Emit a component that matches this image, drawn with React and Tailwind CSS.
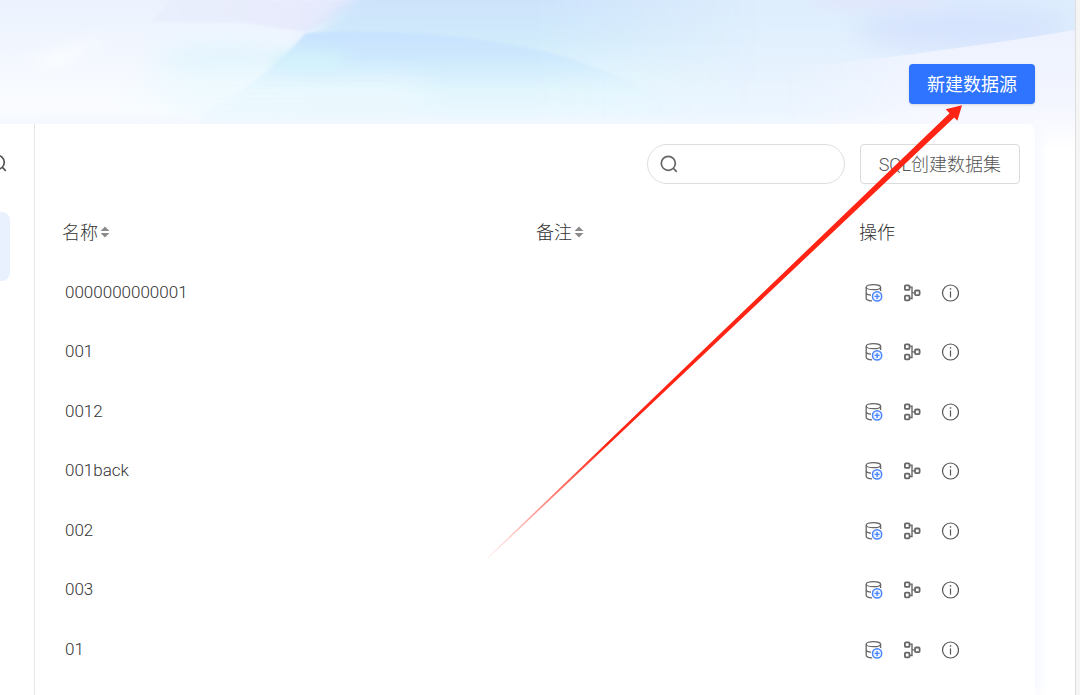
import React, { useState } from 'react';

const ROWS = ['0000000000001', '001', '0012', '001back', '002', '003', '01'];

const SearchIcon = ({ className }) => (
  <svg className={className} viewBox="0 0 18 18" fill="none" stroke="currentColor" strokeWidth="1.7" aria-hidden="true">
    <circle cx="8.3" cy="8.3" r="7" />
    <path d="M13.2 13.2L16.8 16.8" />
  </svg>
);

const DatabaseAddIcon = () => (
  <svg className="h-[18px] w-[18px]" viewBox="0 0 18 18" fill="none" stroke="#666" strokeWidth="1.3" aria-hidden="true">
    <ellipse cx="8.4" cy="3.2" rx="7.2" ry="2.5" />
    <path d="M1.2 3.3V14.3C1.2 15.7 3.6 16.7 7 16.8" />
    <path d="M15.6 3.3V7" />
    <path d="M1.2 9.2C1.6 10.3 3.4 10.9 6 11.1" />
    <circle cx="12.1" cy="12.4" r="4.6" stroke="#4a86ff" strokeWidth="1.5" fill="#eef4ff" />
    <path d="M9.6 12.4H14.6M12.1 9.9V14.9" stroke="#4a86ff" strokeWidth="1.4" />
  </svg>
);

const LineageIcon = () => (
  <svg className="h-[18px] w-[18px]" viewBox="0 0 18 18" fill="none" stroke="#666" strokeWidth="1.8" aria-hidden="true">
    <rect x="1.9" y="1.3" width="4.6" height="4.6" rx="1" />
    <rect x="1.9" y="11.7" width="4.6" height="4.6" rx="1" />
    <rect x="12" y="6.5" width="4.6" height="4.6" rx="1" />
    <path d="M6.7 3.1H9V14.5H6.7M9 8.9H11.9" strokeWidth="1.4" />
  </svg>
);

const InfoIcon = () => (
  <svg className="h-[18px] w-[18px]" viewBox="0 0 18 18" fill="none" stroke="#555" strokeWidth="1.2" aria-hidden="true">
    <circle cx="9.5" cy="9" r="8" />
    <path d="M9.5 7.4V13.6" />
    <path d="M9.5 4.2V5.7" strokeWidth="1.4" />
  </svg>
);

const SortIcon = () => (
  <svg className="h-3 w-[10px]" viewBox="0 0 10 12" fill="#8a8a8a" aria-hidden="true">
    <path d="M5 0.4L9.4 5H0.6Z" />
    <path d="M5 11.6L0.6 7H9.4Z" />
  </svg>
);

const Banner = () => (
  <svg
    className="absolute inset-x-0 top-0 h-[180px] w-full"
    viewBox="0 0 1075 180"
    preserveAspectRatio="none"
    aria-hidden="true"
  >
    <defs>
      <linearGradient id="base" x1="0" y1="0" x2="0" y2="1">
        <stop offset="0" stopColor="#ebf2fe" />
        <stop offset="0.6" stopColor="#fafcff" />
        <stop offset="0.68" stopColor="#f5f9ff" />
        <stop offset="1" stopColor="#ffffff" />
      </linearGradient>
      <linearGradient id="lavender" x1="0" y1="0" x2="1" y2="0">
        <stop offset="0" stopColor="#e9f0fd" />
        <stop offset="0.6" stopColor="#e8ebfc" />
        <stop offset="1" stopColor="#e3e8fd" />
      </linearGradient>
      <linearGradient id="sky" x1="0" y1="0" x2="0" y2="1">
        <stop offset="0" stopColor="#cbdffc" />
        <stop offset="0.4" stopColor="#d0eafb" />
        <stop offset="0.7" stopColor="#e4f8fd" />
        <stop offset="0.95" stopColor="#edf7ff" />
      </linearGradient>
      <linearGradient id="skyFade" x1="0" y1="0" x2="1" y2="0">
        <stop offset="0" stopColor="#888" />
        <stop offset="0.2" stopColor="#fff" />
        <stop offset="0.6" stopColor="#fff" />
        <stop offset="1" stopColor="#000" />
      </linearGradient>
      <linearGradient id="wave" x1="0" y1="0" x2="0" y2="1">
        <stop offset="0" stopColor="#c7e2fe" />
        <stop offset="0.3" stopColor="#cee9fd" />
        <stop offset="0.65" stopColor="#e2f6fd" />
        <stop offset="1" stopColor="#edf8ff" />
      </linearGradient>
      <linearGradient id="right" x1="0" y1="0" x2="0" y2="1">
        <stop offset="0" stopColor="#dbe7fc" />
        <stop offset="0.4" stopColor="#dfeffd" />
        <stop offset="1" stopColor="#eff7ff" />
      </linearGradient>
      <linearGradient id="corner" x1="0" y1="0" x2="0" y2="1">
        <stop offset="0" stopColor="#edf2fe" />
        <stop offset="0.5" stopColor="#f4f6ff" />
        <stop offset="0.8" stopColor="#ffffff" />
      </linearGradient>
      <linearGradient id="cornerFade" x1="0" y1="0" x2="1" y2="0">
        <stop offset="0" stopColor="#000" />
        <stop offset="0.5" stopColor="#fff" />
      </linearGradient>
      <mask id="skyMask">
        <rect x="200" width="560" height="180" fill="url(#skyFade)" />
      </mask>
      <mask id="cornerMask">
        <rect x="780" width="295" height="180" fill="url(#cornerFade)" />
      </mask>
      <filter id="soft1">
        <feGaussianBlur stdDeviation="1" />
      </filter>
      <filter id="soft6" x="-50%" y="-100%" width="200%" height="300%">
        <feGaussianBlur stdDeviation="7" />
      </filter>
      <filter id="soft14" x="-50%" y="-150%" width="200%" height="400%">
        <feGaussianBlur stdDeviation="14" />
      </filter>
      <clipPath id="aboveCorner">
        <path d="M0 0H1075V30Q960 50 780 70H0Z" />
      </clipPath>
    </defs>
    <rect width="1075" height="180" fill="url(#base)" />
    <path d="M20 64L110 36L60 66Z" fill="#fbfdfe" filter="url(#soft6)" />
    <path d="M172 0H372L306 32L240 22L150 22Z" fill="url(#lavender)" filter="url(#soft1)" />
    <rect x="440" y="-60" width="700" height="196" fill="url(#right)" filter="url(#soft14)" />
    <path d="M372 -20H780V130H190Q266 80 372 -20Z" fill="url(#sky)" mask="url(#skyMask)" filter="url(#soft6)" />
    <ellipse cx="225" cy="62" rx="70" ry="18" fill="#e0f4fd" filter="url(#soft14)" />
    <ellipse cx="240" cy="92" rx="110" ry="14" fill="#eefafe" filter="url(#soft14)" />
    <path
      d="M306 33Q430 27 540 50Q640 76 700 124H180Q256 92 306 33Z"
      fill="url(#wave)"
      mask="url(#skyMask)"
      filter="url(#soft1)"
    />
    <ellipse cx="310" cy="62" rx="40" ry="10" fill="#d2f2fb" filter="url(#soft6)" />
    <rect x="180" y="84" width="240" height="30" fill="#eefaff" opacity="0.8" filter="url(#soft14)" />
    <g clipPath="url(#aboveCorner)">
      <ellipse cx="965" cy="28" rx="110" ry="22" fill="#d5e2fd" filter="url(#soft14)" />
      <ellipse cx="880" cy="0" rx="70" ry="8" fill="#e1e6fc" filter="url(#soft6)" />
    </g>
    <path d="M780 70Q960 50 1075 30V180H780Z" fill="url(#corner)" mask="url(#cornerMask)" />
  </svg>
);

// Long tapered pointer from the table up to the create button
const Arrow = () => (
  <svg
    className="pointer-events-none absolute top-[105px] right-[113px] h-[453px] w-[475px]"
    viewBox="0 0 475 453"
    aria-hidden="true"
  >
    <defs>
      <linearGradient id="tail" gradientUnits="userSpaceOnUse" x1="0" y1="453" x2="120" y2="339">
        <stop offset="0" stopColor="#ff2414" stopOpacity="0.05" />
        <stop offset="1" stopColor="#ff2414" />
      </linearGradient>
    </defs>
    <path d="M0 453L462.5 8.2L458.7 4.3L475 0.3L470.4 15.7L467.2 12.4L438 40L1 453.6Z" fill="url(#tail)" />
  </svg>
);

const App = () => {
  const [keyword, setKeyword] = useState('');
  const rows = ROWS.filter((name) => name.includes(keyword));

  return (
    <div className="flex min-h-screen bg-white font-[Roboto,'Noto_Sans_CJK_SC',sans-serif] text-[17px] font-light text-[#333]">
      <div className="relative flex min-w-0 flex-1 flex-col overflow-hidden">
        <Banner />

        {/* Header */}
        <header className="relative flex h-[124px] shrink-0 items-end justify-end pr-10 pb-5">
          <button
            type="button"
            className="h-10 rounded-sm bg-[#2e74ff] px-[18px] text-[18px] font-normal text-white shadow-sm"
          >
            新建数据源
          </button>
        </header>

        <div className="relative flex flex-1 pr-10">
          {/* Sidebar */}
          <aside className="flex w-[35px] shrink-0 flex-col overflow-hidden border-r border-[#e2e2e2] bg-white">
            <button type="button" aria-label="搜索" className="mt-[30px] -ml-[11px] w-[18px]">
              <SearchIcon className="h-[18px] w-[18px] text-[#555]" />
            </button>
            <div className="mt-10 h-[69px] w-[10px] rounded-r-lg bg-[#e9f1ff]" />
          </aside>

          {/* Content */}
          <main className="min-w-0 flex-1 rounded-tr-lg bg-white shadow-[4px_0_14px_#f5f7ff]">
            <div className="flex items-center justify-end gap-[15px] pt-5 pr-[15px] pb-[17px]">
              <label className="flex h-10 w-[198px] items-center gap-2 rounded-full border border-[#dcdfe0] px-3">
                <SearchIcon className="h-[18px] w-[18px] shrink-0 text-[#666]" />
                <input
                  type="text"
                  aria-label="搜索"
                  value={keyword}
                  onChange={(e) => setKeyword(e.target.value)}
                  className="min-w-0 flex-1 bg-transparent outline-none"
                />
              </label>
              <button
                type="button"
                className="h-10 rounded-sm border border-[#dcdcdc] px-[18px] text-[18px] text-[#555]"
              >
                SQL创建数据集
              </button>
            </div>

            <table className="w-full table-fixed text-left">
              <thead>
                <tr className="h-[62px]">
                  <th className="pl-[27px] text-[18px] font-light">
                    <span className="flex items-center gap-[2px]">
                      名称
                      <SortIcon />
                    </span>
                  </th>
                  <th className="w-[323px] pl-[27px] text-[18px] font-light">
                    <span className="flex items-center gap-[2px]">
                      备注
                      <SortIcon />
                    </span>
                  </th>
                  <th className="w-[203px] pl-[27px] text-[18px] font-light">操作</th>
                </tr>
              </thead>
              <tbody>
                {rows.map((name) => (
                  <tr key={name} className="odd:h-[59px] even:h-[60px]">
                    <td className="pl-[30px]">{name}</td>
                    <td />
                    <td className="pl-[33px]">
                      <div className="flex items-center gap-5">
                        <button type="button" aria-label="创建数据集">
                          <DatabaseAddIcon />
                        </button>
                        <button type="button" aria-label="血缘分析">
                          <LineageIcon />
                        </button>
                        <button type="button" aria-label="详情">
                          <InfoIcon />
                        </button>
                      </div>
                    </td>
                  </tr>
                ))}
              </tbody>
            </table>
          </main>
        </div>

        <Arrow />
      </div>
      <div className="w-[5px] shrink-0 border-l border-[#dedede] bg-[#f5f5f5]" />
    </div>
  );
};

export default App;
